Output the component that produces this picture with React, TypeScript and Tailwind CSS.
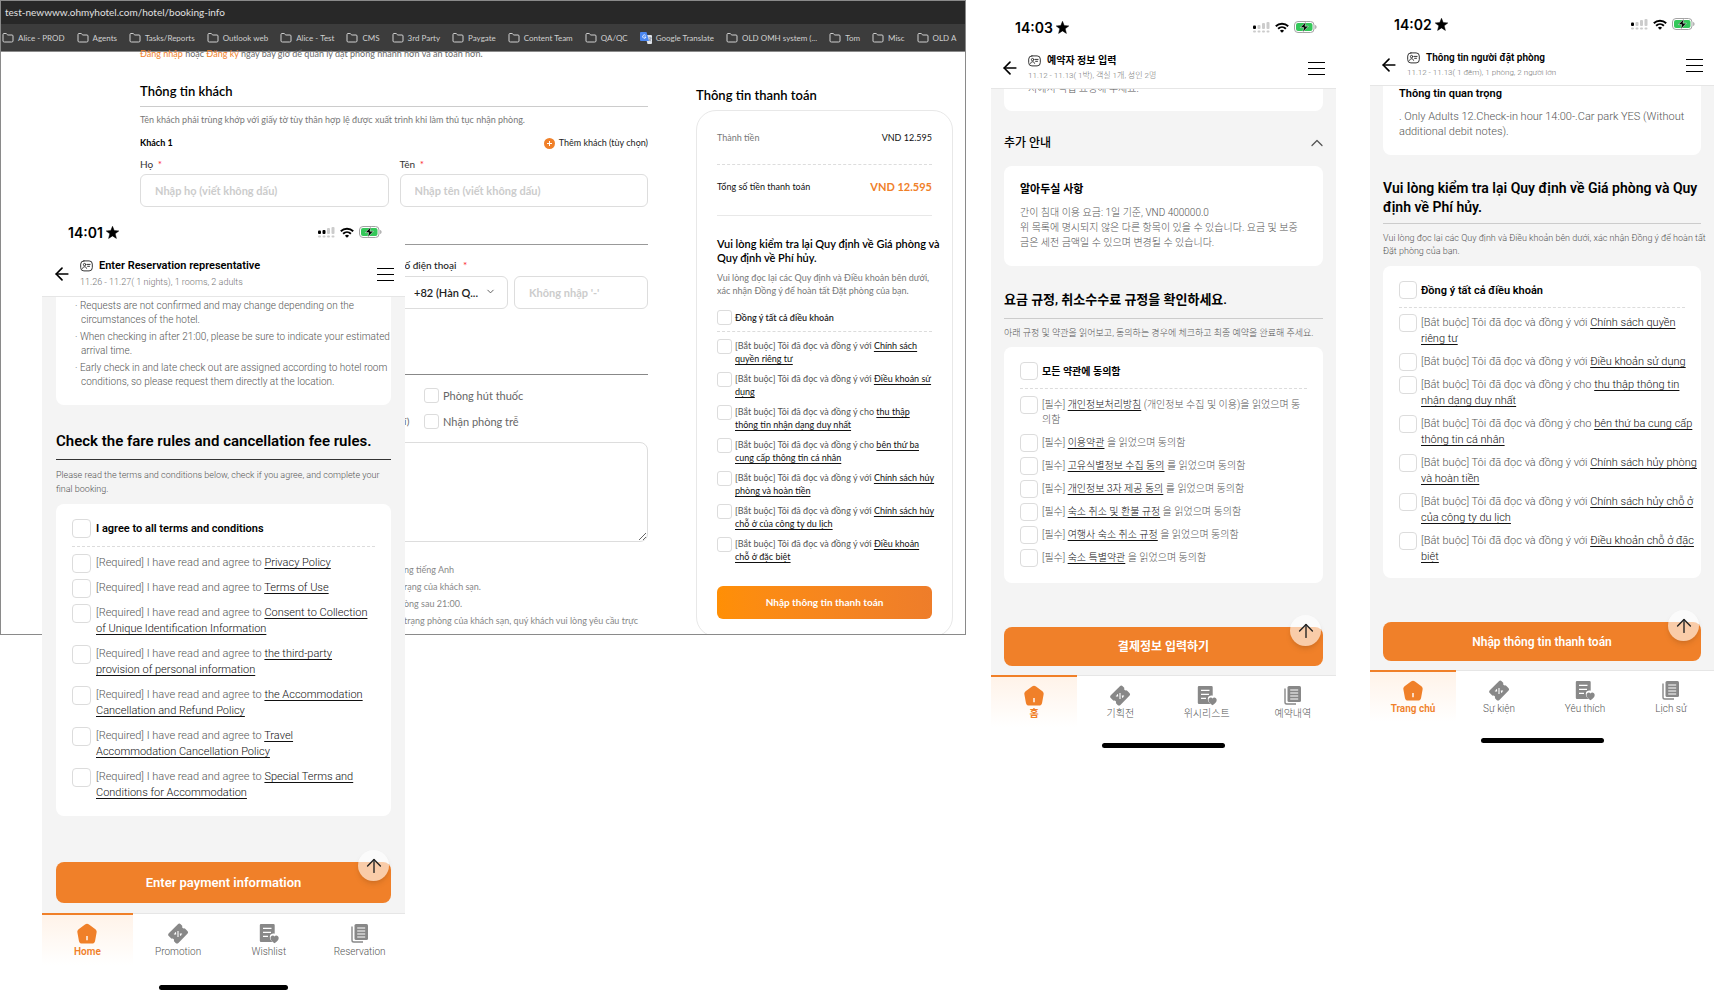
import { ReactNode } from "react";
import { ArrowLeft, ArrowUp, ChevronDown, ChevronUp, Folder } from "lucide-react";
import clsx from "clsx";

interface Term {
  before: string;
  link: string;
  after?: string;
}

const bookmarks = [
  "Alice - PROD",
  "Agents",
  "Tasks/Reports",
  "Outlook web",
  "Alice - Test",
  "CMS",
  "3rd Party",
  "Paygate",
  "Content Team",
  "QA/QC",
  "Google Translate",
  "OLD OMH system (...",
  "Tom",
  "Misc",
  "OLD A",
];

const desktopTerms: Term[] = [
  { before: "[Bắt buộc] Tôi đã đọc và đồng ý với ", link: "Chính sách\nquyền riêng tư" },
  { before: "[Bắt buộc] Tôi đã đọc và đồng ý với ", link: "Điều khoản sử\ndụng" },
  { before: "[Bắt buộc] Tôi đã đọc và đồng ý cho ", link: "thu thập\nthông tin nhận dạng duy nhất" },
  { before: "[Bắt buộc] Tôi đã đọc và đồng ý cho ", link: "bên thứ ba\ncung cấp thông tin cá nhân" },
  { before: "[Bắt buộc] Tôi đã đọc và đồng ý với ", link: "Chính sách hủy\nphòng và hoàn tiền" },
  { before: "[Bắt buộc] Tôi đã đọc và đồng ý với ", link: "Chính sách hủy\nchỗ ở của công ty du lịch" },
  { before: "[Bắt buộc] Tôi đã đọc và đồng ý với ", link: "Điều khoản\nchỗ ở đặc biệt" },
];

const englishTerms: Term[] = [
  { before: "[Required] I have read and agree to ", link: "Privacy Policy" },
  { before: "[Required] I have read and agree to ", link: "Terms of Use" },
  { before: "[Required] I have read and agree to ", link: "Consent to Collection\nof Unique Identification Information" },
  { before: "[Required] I have read and agree to ", link: "the third-party\nprovision of personal information" },
  { before: "[Required] I have read and agree to ", link: "the Accommodation\nCancellation and Refund Policy" },
  { before: "[Required] I have read and agree to ", link: "Travel\nAccommodation Cancellation Policy" },
  { before: "[Required] I have read and agree to ", link: "Special Terms and\nConditions for Accommodation" },
];

const koreanTerms: Term[] = [
  { before: "[필수] ", link: "개인정보처리방침", after: " (개인정보 수집 및 이용)을 읽었으며 동\n의함" },
  { before: "[필수] ", link: "이용약관", after: " 을 읽었으며 동의함" },
  { before: "[필수] ", link: "고유식별정보 수집 동의", after: " 를 읽었으며 동의함" },
  { before: "[필수] ", link: "개인정보 3자 제공 동의", after: " 를 읽었으며 동의함" },
  { before: "[필수] ", link: "숙소 취소 및 환불 규정", after: " 을 읽었으며 동의함" },
  { before: "[필수] ", link: "여행사 숙소 취소 규정", after: " 을 읽었으며 동의함" },
  { before: "[필수] ", link: "숙소 특별약관", after: " 을 읽었으며 동의함" },
];

const vietnameseTerms: Term[] = [
  { before: "[Bắt buộc] Tôi đã đọc và đồng ý với ", link: "Chính sách quyền\nriêng tư" },
  { before: "[Bắt buộc] Tôi đã đọc và đồng ý với ", link: "Điều khoản sử dụng" },
  { before: "[Bắt buộc] Tôi đã đọc và đồng ý cho ", link: "thu thập thông tin\nnhận dạng duy nhất" },
  { before: "[Bắt buộc] Tôi đã đọc và đồng ý cho ", link: "bên thứ ba cung cấp\nthông tin cá nhân" },
  { before: "[Bắt buộc] Tôi đã đọc và đồng ý với ", link: "Chính sách hủy phòng\nvà hoàn tiền" },
  { before: "[Bắt buộc] Tôi đã đọc và đồng ý với ", link: "Chính sách hủy chỗ ở\ncủa công ty du lịch" },
  { before: "[Bắt buộc] Tôi đã đọc và đồng ý với ", link: "Điều khoản chỗ ở đặc\nbiệt" },
];

function TranslateIcon() {
  return (
    <svg width="12" height="12" viewBox="0 0 12 12" className="shrink-0">
      <path d="M5 3h6a1 1 0 0 1 1 1v7a1 1 0 0 1-1 1H7.500z" fill="#dfe3ea" />
      <path d="M1 0h5.500l2.500 9H1a1 1 0 0 1-1-1V1a1 1 0 0 1 1-1z" fill="#4a86f0" />
      <path d="M5.600 3.400A1.700 1.700 0 1 0 6 5H4.400" fill="none" stroke="#fff" strokeWidth=".8" />
      <path d="M8.500 6h3M10 5.200V6M11 6c-.3 1.500-1.200 2.300-2 2.800M9 7c.5 1 1.200 1.700 2.200 2.200" fill="none" stroke="#6d7787" strokeWidth=".6" />
    </svg>
  );
}

function StarIcon() {
  return (
    <svg width="13" height="13" viewBox="0 0 13 13" className="ml-[3px]">
      <path d="M6.500.3l1.700 4.300 4.600.3-3.600 2.900 1.200 4.600-3.900-2.500-3.900 2.500 1.200-4.600L.2 4.900l4.600-.3z" fill="#000" stroke="#000" strokeWidth=".5" />
    </svg>
  );
}

function SignalIcon({ bars }: { bars: number }) {
  return (
    <svg width="17" height="11" viewBox="0 0 17 11">
      {[0, 1, 2, 3].map((i) => (
        <g key={i} fill={i < bars ? "#000" : "#ccc"}>
          <rect x={i * 4.5} y={i < 2 ? 3.5 - i * 0.5 : 3 - i} width="3" height={i < 2 ? 3.5 + i * 0.5 : 4 + i} rx="1" />
          <rect x={i * 4.5} y="8.500" width="3" height="2" rx="1" fill="#ccc" />
        </g>
      ))}
    </svg>
  );
}

function WifiIcon() {
  return (
    <svg width="14" height="11" viewBox="0 0 14 11" fill="none" stroke="#000" strokeWidth="1.900">
      <path d="M.8 4.200a9 9 0 0 1 12.400 0" />
      <path d="M3.100 6.700a5.700 5.700 0 0 1 7.800 0" />
      <path d="M7 10.800 4.900 8.700a3.200 3.200 0 0 1 4.200 0z" fill="#000" stroke="none" />
    </svg>
  );
}

function BatteryIcon() {
  return (
    <svg width="23" height="12" viewBox="0 0 23 12">
      <rect x=".5" y=".5" width="19.500" height="11" rx="3.500" fill="#fff" stroke="#a3a3a3" />
      <rect x="2" y="2" width="16.500" height="8" rx="2" fill="#34c759" />
      <path d="M21.200 4v4c.9-.3 1.300-1 1.300-2s-.4-1.700-1.300-2z" fill="#a3a3a3" />
      <path d="M12 .8 6.300 6.600h3.400l-.9 4.600 5.600-6H11z" fill="#000" stroke="#fff" strokeWidth=".5" />
    </svg>
  );
}

function IdCardIcon() {
  return (
    <svg width="13" height="12" viewBox="0 0 13 12" fill="none" stroke="#333" strokeWidth="1" strokeLinecap="round">
      <rect x=".7" y=".9" width="11.600" height="10" rx="3.200" />
      <circle cx="4.600" cy="4.600" r="1.200" />
      <path d="M2.600 8.300c.4-2.200 3.600-2.200 4 0M7.200 4.400h2.900M7.600 6.300h1.900" />
    </svg>
  );
}

function HomeIcon() {
  return (
    <svg width="22" height="22" viewBox="0 0 22 22">
      <path d="M9 1.600a3.400 3.400 0 0 1 4 0l6.400 4.700c1 .8 1.500 1.900 1.200 3.100l-1.500 8.300a3.500 3.500 0 0 1-3.400 2.900H6.300a3.500 3.500 0 0 1-3.400-2.900L1.400 9.400c-.3-1.200.2-2.300 1.200-3.100z" fill="currentColor" />
      <path d="M11 13v4.200" stroke="#fff" strokeWidth="1.400" />
    </svg>
  );
}

function PromotionIcon() {
  return (
    <svg width="22" height="22" viewBox="0 0 22 22">
      <path d="M10.900 1.300a2 2 0 0 1 2.800 0l1.700 1.700c-.9 1.500.8 3.200 2.300 2.300l2.700 2.600a2 2 0 0 1 0 2.800l-9 9.200a2 2 0 0 1-2.800 0l-1.800-1.800c.9-1.500-.8-3.200-2.300-2.300l-2.700-2.700a2 2 0 0 1 0-2.800z" fill="currentColor" />
      <path d="M11 8v6M8.500 9.300v1.700M6.900 11h2.300M12.800 11h2.300M13.600 11v1.700" stroke="#fff" strokeWidth="1.100" />
    </svg>
  );
}

function WishlistIcon() {
  return (
    <svg width="22" height="22" viewBox="0 0 22 22">
      <path d="M3 1h12.500a1.200 1.200 0 0 1 1.200 1.200v8.600c-2-.6-4.700.3-4.900 2.700-.1 2.500 1.200 4 2.600 5.500H3a1.200 1.200 0 0 1-1.200-1.200V2.200A1.200 1.200 0 0 1 3 1z" fill="currentColor" />
      <path d="M5 5.300h8.500M5 9.300h8M5 13.300h5" stroke="#fff" strokeWidth="1.300" />
      <path d="M16.500 20.200c-2.500-1.900-4-3.200-4-5.300 0-2.600 3-3.300 4-1.400 1-1.900 4.200-1.200 4.200 1.400 0 2.100-1.700 3.400-4.200 5.300z" fill="currentColor" />
    </svg>
  );
}

function ReservationIcon() {
  return (
    <svg width="20" height="22" viewBox="0 0 20 22">
      <rect x="4.500" y="1" width="13.500" height="16" rx="1.500" fill="currentColor" />
      <path d="M2 3.500v13.700a1.800 1.800 0 0 0 1.800 1.800H13" fill="none" stroke="currentColor" strokeWidth="1.400" />
      <path d="M7.200 5h8M7.200 8h8M7.200 11h8M7.200 14h8" stroke="#fff" strokeWidth="1.200" />
    </svg>
  );
}

const termStyles = {
  desktop: {
    box: "size-[15px] rounded-[3px]",
    head: "gap-[3px] pb-1.5",
    all: "text-[9px] leading-[15px] text-[#222]",
    list: "gap-[7px] pt-[7px]",
    item: "h-[26px] gap-[3px]",
    line: "h-[13px]",
    text: "text-[9px] leading-[13px]",
  },
  english: {
    box: "-mt-px size-[19px] rounded",
    head: "gap-[5px] pb-2",
    all: "text-[11px] leading-[16px] text-black",
    list: "gap-[9px] pt-2",
    item: "gap-[5px]",
    line: "h-[16px]",
    text: "text-[11px] leading-[16px] font-light",
  },
  korean: {
    box: "-mt-px size-[18px] rounded",
    head: "gap-1 pb-2",
    all: "text-[10px] leading-[16px] text-black",
    list: "gap-2 pt-2",
    item: "gap-1",
    line: "h-[15px]",
    text: "text-[10px] leading-[15px] font-light",
  },
  vietnamese: {
    box: "-mt-px size-[18px] rounded",
    head: "gap-1 pb-2",
    all: "text-[11px] leading-[16px] text-black",
    list: "gap-[7px] pt-[7px]",
    item: "gap-1",
    line: "h-[16px]",
    text: "text-[11px] leading-[16px] font-light",
  },
};

function Terms({
  id,
  allLabel,
  terms,
  variant,
}: {
  id: string;
  allLabel: string;
  terms: Term[];
  variant: keyof typeof termStyles;
}) {
  const s = termStyles[variant];
  const box = clsx("shrink-0 appearance-none border border-[#dcdcdc] bg-white checked:bg-[#f08029]", s.box);
  return (
    <div>
      <div className={clsx("flex items-center border-b border-dashed border-[#dcdcdc]", s.head)}>
        <input type="checkbox" id={`${id}-all`} className={box} />
        <label htmlFor={`${id}-all`} className={clsx("font-semibold whitespace-nowrap", s.all)}>
          {allLabel}
        </label>
      </div>
      <ul className={clsx("flex flex-col", s.list)}>
        {terms.map((term, i) => (
          <li key={i} className={clsx("flex items-start", s.item)}>
            <div className={clsx("flex shrink-0", s.line)}>
              <input type="checkbox" id={`${id}-${i}`} className={box} />
            </div>
            <label htmlFor={`${id}-${i}`} className={clsx("whitespace-pre text-[#555]", s.text)}>
              {term.before}
              <a href="#" className="text-[#111] underline decoration-1 underline-offset-2 [text-decoration-skip-ink:none]">
                {term.link}
              </a>
              {term.after}
            </label>
          </li>
        ))}
      </ul>
    </div>
  );
}

interface PhoneProps {
  large?: boolean;
  className?: string;
  time: string;
  bars: number;
  title: string;
  subtitle: string;
  tabs: string[];
  action: string;
  children: ReactNode;
}

function Phone({ large, className, time, bars, title, subtitle, tabs, action, children }: PhoneProps) {
  const icons = [<HomeIcon />, <PromotionIcon />, <WishlistIcon />, <ReservationIcon />];
  return (
    <section className={clsx("bg-white font-['Roboto','Noto_Sans_CJK_KR',sans-serif]", className)}>
      {/* Status bar */}
      <div className={clsx("flex h-5 items-center", large ? "pr-[23px] pl-[26px]" : "pr-[19px] pl-6")}>
        <span className="font-['Inter',sans-serif] text-[14px] font-semibold text-black">{time}</span>
        <StarIcon />
        <div className="ml-auto flex items-center gap-[5px]">
          <SignalIcon bars={bars} />
          <WifiIcon />
          <BatteryIcon />
        </div>
      </div>

      {/* Page header */}
      <header className={clsx("flex items-center border-b border-[#e6e6e6] pt-4 pr-[11px]", large ? "pb-[6px] pl-[10px]" : "pb-[5px] pl-[9px]")}>
        <button type="button" aria-label="Back" className="text-black">
          <ArrowLeft className="size-5" strokeWidth={2} />
        </button>
        <div className="ml-2 flex-1">
          <h1 className={clsx("flex items-center gap-[6px] font-semibold text-black", large ? "text-[11px] leading-[16px]" : "text-[10px] leading-[15px]")}>
            <IdCardIcon />
            {title}
          </h1>
          <p className={clsx("font-light text-[#777]", large ? "text-[9px] leading-[16px]" : "text-[8px] leading-[15px]")}>{subtitle}</p>
        </div>
        <button type="button" aria-label="Menu" className="flex w-[17px] flex-col gap-[5px]">
          <span className="h-[1px] w-full bg-black" />
          <span className="h-[1px] w-full bg-black" />
          <span className="h-[1px] w-full bg-black" />
        </button>
      </header>

      {/* Scrolled page */}
      <main className={clsx("overflow-hidden bg-[#f4f4f4]", large ? "px-[14px] pb-[10px]" : "px-[13px] pb-[9px]")}>
        {children}
        <div className={clsx("relative", large ? "mt-[46px]" : "mt-[44px]")}>
          <button
            type="button"
            className={clsx("w-full rounded-lg bg-[#f08029] font-semibold text-white", large ? "h-[41px] text-[13px]" : "h-[39px] text-[12px]")}
          >
            {action}
          </button>
          <button
            type="button"
            aria-label="Back to top"
            className="absolute -top-3 right-[2px] flex size-[31px] items-center justify-center rounded-full bg-white/60 text-[#222] shadow-md"
          >
            <ArrowUp className="size-[22px]" strokeWidth={1.5} />
          </button>
        </div>
      </main>

      {/* Tab bar */}
      <nav className="grid grid-cols-4 border-t border-[#e6e6e6]">
        {tabs.map((tab, i) => (
          <a
            key={tab}
            href="#"
            className={clsx(
              "-mt-px flex flex-col items-center border-t-2 pt-2 pb-1.5 text-[10px] leading-[14px]",
              i === 0 ? "border-[#f08029] bg-gradient-to-b from-[#fff3e9] to-white font-semibold text-[#f08029]" : "border-transparent font-light text-[#888]"
            )}
          >
            {icons[i]}
            <span className={i === 0 ? "" : "text-[#555]"}>{tab}</span>
          </a>
        ))}
      </nav>
      <div className={clsx("mx-auto h-[5px] rounded-full bg-black", large ? "mt-5 w-[129px]" : "mt-4 w-[123px]")} />
    </section>
  );
}

const fieldClass =
  "h-[33px] rounded-md border border-[#ddd] px-[14px] text-[11px] font-bold placeholder:text-[#ccc]";

function Browser() {
  return (
    <div className="h-[635px] overflow-hidden border border-[#8a8a8a] bg-white font-['Lato','Noto_Sans',sans-serif]">
      {/* Address bar */}
      <div className="flex h-[23px] items-center bg-[#282828] px-1 text-[10px] text-[#e0e0e0]">
        test-newwww.ohmyhotel.com/hotel/booking-info
      </div>
      <div className="flex h-[28px] items-center gap-3 overflow-hidden border-b border-[#8a8a8a] bg-[#3c3c3c] pl-px text-[8px] text-[#d0d0d0]">
        {bookmarks.map((name) => (
          <a key={name} href="#" className="flex shrink-0 items-center gap-1">
            {name === "Google Translate" ? <TranslateIcon /> : <Folder className="size-[12px]" strokeWidth={2} />}
            {name}
          </a>
        ))}
      </div>

      <div className="flex pr-3">
        {/* Guest form */}
        <div className="ml-[139px] min-w-0 flex-1">
          <p className="-mt-[5px] text-[9px] leading-[14px] text-[#666]">
            <a href="#" className="text-[#f08029]">Đăng nhập</a> hoặc <a href="#" className="text-[#f08029]">Đăng ký</a> ngay bây giờ để quản lý
            đặt phòng nhanh hơn và an toàn hơn.
          </p>
          <h2 className="mt-[19px] border-b border-[#ccc] pb-1 text-[13px] leading-[22px] font-semibold text-black">Thông tin khách</h2>
          <p className="mt-[6px] text-[9px] leading-[14px] text-[#777]">
            Tên khách phải trùng khớp với giấy tờ tùy thân hợp lệ được xuất trình khi làm thủ tục nhận phòng.
          </p>
          <div className="mt-[9px] flex items-center justify-between text-[9px] leading-[14px] text-[#222]">
            <strong className="font-bold text-black">Khách 1</strong>
            <button type="button" className="flex items-center gap-1">
              <svg width="11" height="11" viewBox="0 0 11 11">
                <circle cx="5.500" cy="5.500" r="5.500" fill="#f08029" />
                <path d="M5.500 3v5M3 5.500h5" stroke="#fff" />
              </svg>
              Thêm khách (tùy chọn)
            </button>
          </div>
          <div className="mt-[7px] grid grid-cols-2 gap-[11px] text-[10px] leading-[14px] text-[#333]">
            <div>
              <label htmlFor="last-name">Họ <span className="ml-0.5 text-red-500">*</span></label>
              <input id="last-name" placeholder="Nhập họ (viết không dấu)" className={clsx("mt-[3px] w-full", fieldClass)} />
            </div>
            <div>
              <label htmlFor="first-name">Tên <span className="ml-0.5 text-red-500">*</span></label>
              <input id="first-name" placeholder="Nhập tên (viết không dấu)" className={clsx("mt-[3px] w-full", fieldClass)} />
            </div>
          </div>

          {/* Contact */}
          <div className="mt-[37px] border-t border-[#999] pt-[13px] pl-[259px] text-[10px] leading-[14px] text-[#222]">
            <label htmlFor="phone" className="font-medium">Số điện thoại <span className="ml-1 text-red-500">*</span></label>
            <div className="mt-1 flex gap-[6px]">
              <div className="relative w-[109px]">
                <select aria-label="Country code" className="h-[33px] w-full appearance-none rounded-md border border-[#ddd] pl-[14px] text-[11px] font-semibold text-[#222]">
                  <option>+82 (Hàn Q...</option>
                </select>
                <ChevronDown className="absolute top-2.5 right-3 size-[11px] text-[#555]" />
              </div>
              <input id="phone" placeholder="Không nhập '-'" className={clsx("min-w-0 flex-1", fieldClass)} />
            </div>
          </div>

          {/* Requests */}
          <div className="mt-[65px] border-t border-[#888] pt-[13px] text-[#666]">
            <div className="flex flex-col gap-[11px] pl-[264px] text-[11px] leading-[15px]">
              <div className="flex items-center">
                <span className="w-[20px]" />
                <input id="smoking" type="checkbox" className="mr-1 size-[15px] appearance-none rounded-[3px] border border-[#dcdcdc]" />
                <label htmlFor="smoking">Phòng hút thuốc</label>
              </div>
              <div className="flex items-center">
                <span className="w-[20px] text-[10px]">í)</span>
                <input id="late" type="checkbox" className="mr-1 size-[15px] appearance-none rounded-[3px] border border-[#dcdcdc]" />
                <label htmlFor="late">Nhận phòng trễ</label>
              </div>
            </div>
            <textarea aria-label="Requests" className="mt-[13px] block h-[100px] w-full rounded-lg border border-[#ddd]" />
            <ul className="mt-[19px] pl-[264px] text-[9px] leading-[17px] whitespace-nowrap text-[#888]">
              <li>ng tiếng Anh</li>
              <li>rạng của khách sạn.</li>
              <li>òng sau 21:00.</li>
              <li>trạng phòng của khách sạn, quý khách vui lòng yêu cầu trực</li>
            </ul>
          </div>
        </div>

        {/* Payment summary */}
        <aside className="ml-12 w-[257px] shrink-0 pt-8">
          <h2 className="text-[13px] leading-[22px] font-semibold text-black">Thông tin thanh toán</h2>
          <div className="mt-1 rounded-[20px] border border-[#e8e8e8] px-5 pt-5 pb-[17px]">
            <div className="flex items-center justify-between text-[9px] leading-[14px]">
              <span className="text-[#777]">Thành tiền</span>
              <span className="text-[#111]">VND 12.595</span>
            </div>
            <div className="mt-[19px] flex items-center justify-between border-t border-dashed border-[#ddd] pt-[13px] text-[9px] leading-[18px]">
              <span className="text-[#111]">Tổng số tiền thanh toán</span>
              <span className="text-[11px] font-bold text-[#f08029]">VND 12.595</span>
            </div>
            <h3 className="mt-[19px] border-t border-[#e8e8e8] pt-[21px] text-[11px] leading-[14px] font-semibold whitespace-nowrap text-black">
              Vui lòng kiểm tra lại Quy định về Giá phòng và
              <br />
              Quy định về Phí hủy.
            </h3>
            <p className="mt-[6px] mb-[13px] text-[9px] leading-[13px] whitespace-nowrap text-[#777]">
              Vui lòng đọc lại các Quy định và Điều khoản bên dưới,
              <br />
              xác nhận Đồng ý để hoàn tất Đặt phòng của bạn.
            </p>
            <Terms id="web" allLabel="Đồng ý tất cả điều khoản" terms={desktopTerms} variant="desktop" />
            <button type="button" className="mt-[23px] h-[33px] w-full rounded-md bg-gradient-to-r from-[#ff8f05] to-[#ee7d2a] text-[10px] font-bold text-white">
              Nhập thông tin thanh toán
            </button>
          </div>
        </aside>
      </div>
    </div>
  );
}

export default function App() {
  return (
    <div className="grid min-h-screen grid-cols-[minmax(0,966fr)_minmax(0,370fr)_minmax(0,378fr)] items-start overflow-hidden bg-white">
      <div className="relative">
        <Browser />
        <Phone
          large
          className="absolute top-[212px] left-[42px] w-[363px] pt-[10px]"
          time="14:01"
          bars={2}
          title="Enter Reservation representative"
          subtitle="11.26 - 11.27( 1 nights), 1 rooms, 2 adults"
          tabs={["Home", "Promotion", "Wishlist", "Reservation"]}
          action="Enter payment information"
        >
          <ul className="flex flex-col gap-[3px] rounded-b-lg bg-white pt-[2px] pr-4 pb-4 pl-[25px] text-[10px] leading-[14px] font-light whitespace-nowrap text-[#555]">
            {[
              ["Requests are not confirmed and may change depending on the", "circumstances of the hotel."],
              ["When checking in after 21:00, please be sure to indicate your estimated", "arrival time."],
              ["Early check in and late check out are assigned according to hotel room", "conditions, so please request them directly at the location."],
            ].map((lines) => (
              <li key={lines[0]} className="-indent-[6px]">
                · {lines[0]}
                <span className="block indent-0">{lines[1]}</span>
              </li>
            ))}
          </ul>
          <h2 className="mt-[26px] border-b border-[#333] pb-[8px] text-[15px] leading-[20px] font-semibold text-black">
            Check the fare rules and cancellation fee rules.
          </h2>
          <p className="mt-2 text-[9px] leading-[14px] font-light whitespace-nowrap text-[#555]">
            Please read the terms and conditions below, check if you agree, and complete your
            <br />
            final booking.
          </p>
          <div className="mt-2 rounded-lg bg-white px-4 pt-4 pb-[15px]">
            <Terms id="en" allLabel="I agree to all terms and conditions" terms={englishTerms} variant="english" />
          </div>
        </Phone>
      </div>

      <Phone
        className="ml-[25px] pt-[17px]"
        time="14:03"
        bars={1}
        title="예약자 정보 입력"
        subtitle="11.12 - 11.13( 1박), 객실 1개, 성인 2명"
        tabs={["홈", "기획전", "위시리스트", "예약내역"]}
        action="결제정보 입력하기"
      >
        <div className="h-[22px] overflow-hidden rounded-b-lg bg-white pl-6">
          <p className="-mt-[7px] text-[10px] leading-[14px] font-light text-[#555]">지에서 직접 요청해 주세요.</p>
        </div>
        <div className="mt-[22px] flex items-center justify-between">
          <h2 className="text-[12px] leading-[20px] font-medium text-black">추가 안내</h2>
          <ChevronUp className="-mr-1 size-5 text-[#555]" strokeWidth={1.5} />
        </div>
        <div className="mt-[13px] rounded-lg bg-white px-4 pt-4 pb-4">
          <h3 className="text-[11px] leading-[16px] font-semibold text-black">알아두실 사항</h3>
          <p className="mt-[7px] text-[10px] leading-[15px] font-light whitespace-nowrap text-[#555]">
            간이 침대 이용 요금: 1일 기준, VND 400000.0
            <br />
            위 목록에 명시되지 않은 다른 항목이 있을 수 있습니다. 요금 및 보증
            <br />
            금은 세전 금액일 수 있으며 변경될 수 있습니다.
          </p>
        </div>
        <h2 className="mt-6 border-b border-[#ccc] pb-2 text-[13px] leading-[20px] font-semibold text-black">
          요금 규정, 취소수수료 규정을 확인하세요.
        </h2>
        <p className="mt-[7px] text-[9px] leading-[14px] font-light whitespace-nowrap text-[#555]">
          아래 규정 및 약관을 읽어보고, 동의하는 경우에 체크하고 최종 예약을 완료해 주세요.
        </p>
        <div className="mt-[7px] rounded-lg bg-white px-4 pt-4 pb-[18px]">
          <Terms id="ko" allLabel="모든 약관에 동의함" terms={koreanTerms} variant="korean" />
        </div>
      </Phone>

      <Phone
        className="ml-[34px] pt-[14px]"
        time="14:02"
        bars={1}
        title="Thông tin người đặt phòng"
        subtitle="11.12 - 11.13( 1 đêm), 1 phòng, 2 người lớn"
        tabs={["Trang chủ", "Sự kiện", "Yêu thích", "Lịch sử"]}
        action="Nhập thông tin thanh toán"
      >
        <div className="rounded-b-lg bg-white px-4 pb-4">
          <h3 className="text-[11px] leading-[16px] font-semibold text-black">Thông tin quan trọng</h3>
          <p className="mt-[7px] text-[11px] leading-[15px] font-light whitespace-nowrap text-[#555]">
            . Only Adults 12.Check-in hour 14:00-.Car park YES (Without
            <br />
            additional debit notes).
          </p>
        </div>
        <h2 className="mt-6 border-b border-[#ccc] pb-[6px] text-[14px] leading-[19px] font-semibold whitespace-nowrap text-black">
          Vui lòng kiểm tra lại Quy định về Giá phòng và Quy
          <br />
          định về Phí hủy.
        </h2>
        <p className="mt-2 text-[9px] leading-[13px] font-light whitespace-nowrap text-[#555]">
          Vui lòng đọc lại các Quy định và Điều khoản bên dưới, xác nhận Đồng ý để hoàn tất
          <br />
          Đặt phòng của bạn.
        </p>
        <div className="mt-[8px] rounded-lg bg-white px-4 pt-4 pb-[13px]">
          <Terms id="vi" allLabel="Đồng ý tất cả điều khoản" terms={vietnameseTerms} variant="vietnamese" />
        </div>
      </Phone>
    </div>
  );
}
